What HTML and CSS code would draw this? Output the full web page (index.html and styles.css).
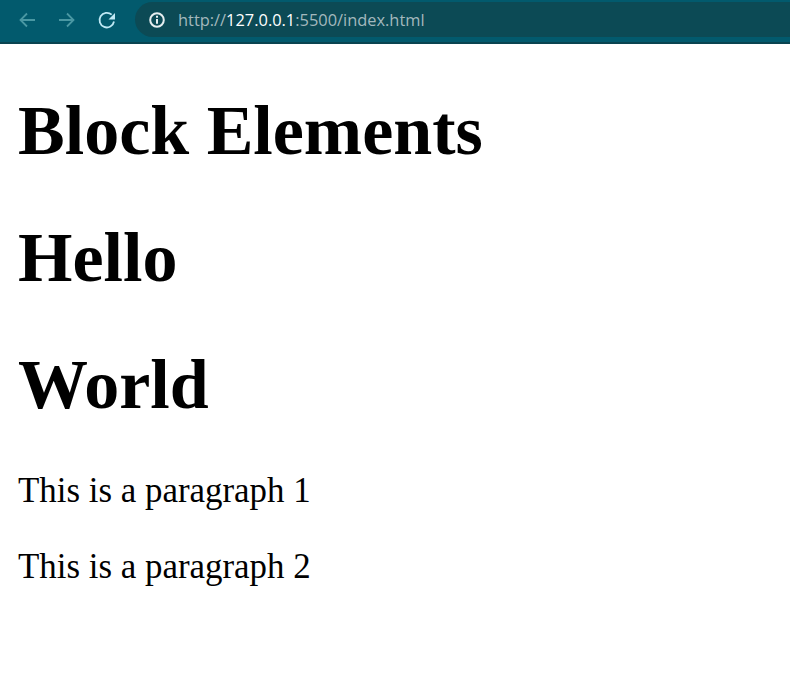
FILE: index.html
```html
<!DOCTYPE html>
<html lang="en">
<head>
    <meta charset="UTF-8">
    <title>Block Elements</title>
    <link rel="stylesheet" href="styles.css">
</head>
<body>

    <div class="toolbar">
        <svg class="nav-icon dim" viewBox="0 0 20 20"><path d="M18 10H3M10 3.500L3.500 10l6.500 6.500"/></svg>
        <svg class="nav-icon dim" viewBox="0 0 20 20"><path d="M2 10h15M10 3.500l6.500 6.500-6.500 6.500"/></svg>
        <svg class="nav-icon reload" viewBox="0 0 20 20"><path d="M17 11.500a7.300 7.300 0 1 1-2.300-6.800"/><path class="fill" d="M18 3v6.500h-6.500z"/></svg>
        <div class="omnibox">
            <svg class="info-icon" viewBox="0 0 16 16"><circle cx="8" cy="8" r="6.800"/><path d="M8 7v4.800M8 3.800v1.900"/></svg>
            <span class="url">http://<b>127.0.0.1</b>:5500/index.html</span>
        </div>
    </div>

    <div class="page">
        <h1>Block Elements</h1>
        <h1>Hello</h1>
        <h1>World</h1>
        <p>This is a paragraph 1</p>
        <p>This is a paragraph 2</p>
    </div>

</body>
</html>
```
FILE: styles.css
```css
body {
    margin: 0;
    background-color: #fff;
    font-family: "Liberation Serif", serif;
    color: #000;
}
.toolbar {
    display: flex;
    align-items: center;
    height: 44px;
    padding-left: 17px;
    padding-bottom: 3px;
    box-sizing: border-box;
    background-color: #025a6d;
    border-bottom: 2px solid #0a4450;
}
.nav-icon {
    width: 20px;
    height: 20px;
    margin-right: 20px;
    fill: none;
    stroke-width: 1.8;
}
.nav-icon.dim {
    stroke: #4a98a3;
}
.nav-icon.reload {
    stroke: #bfe9f5;
    margin-right: 18px;
}
.nav-icon .fill {
    fill: #bfe9f5;
    stroke: none;
}
.omnibox {
    flex: 1;
    display: flex;
    align-items: center;
    height: 35px;
    padding-left: 14px;
    background-color: #0c4a55;
    border-radius: 18px 0 0 18px;
}
.info-icon {
    width: 16px;
    height: 16px;
    margin-right: 13px;
    fill: none;
    stroke: #e6eef0;
    stroke-width: 2;
}
.url {
    font-family: "Open Sans", sans-serif;
    font-size: 16.400px;
    color: #a3b8bd;
}
.url b {
    font-weight: 400;
    color: #fff;
}
.page {
    padding-left: 18px;
}
h1 {
    font-size: 70px;
    line-height: 80px;
    margin: 47px 0;
}
p {
    font-size: 34.900px;
    line-height: 38px;
    margin: 38px 0;
}
```
